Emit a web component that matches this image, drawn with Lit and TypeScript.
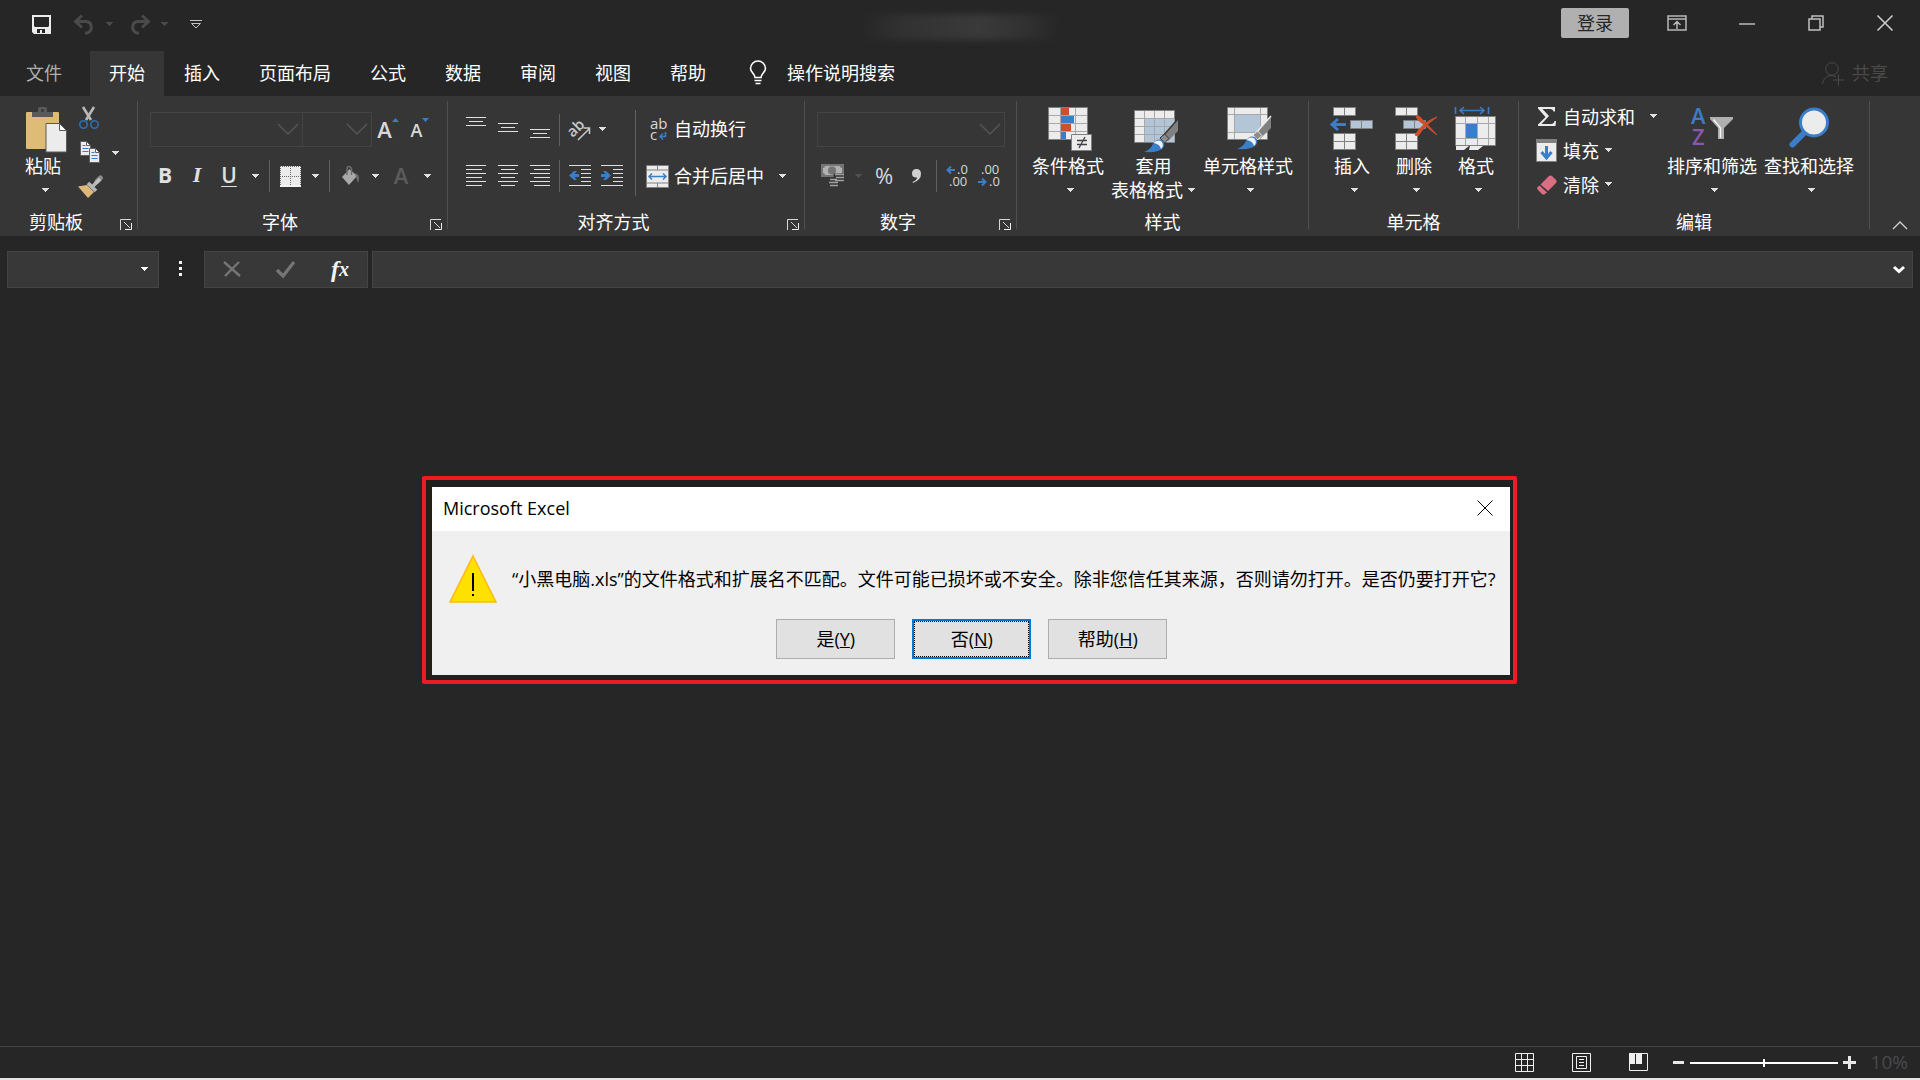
import { LitElement, html, svg, css, nothing } from "lit";
import type { TemplateResult, SVGTemplateResult } from "lit";
import { customElement } from "lit/decorators.js";

/* ---------- shared glyph colours ---------- */
const PALE = "#ececec";
const BLUE = "#3a7dc8";
const SKY = "#b3c6d8";
const GREY = "#808080";
const RED = "#cf4f2c";

const icon = (w: number, h: number, body: SVGTemplateResult) =>
  html`<svg width=${w} height=${h} viewBox="0 0 ${w} ${h}" fill="none" aria-hidden="true">${body}</svg>`;

const caret = (color = "#e0e0e0") =>
  icon(8, 5, svg`<path d="M0 0h7v1H6v1H5v1H4v1H3V3H2V2H1V1H0z" fill=${color} />`);

const chevron = icon(22, 13, svg`<path d="M1 1l10 10L21 1" stroke="#555" stroke-width="1.5" />`);

/* ---------- horizontal line sets for the alignment buttons ---------- */
const lines = (rows: Array<[number, number, number]>, h = 24) =>
  icon(20, h, svg`${rows.map(([x, y, w]) => svg`<rect x=${x} y=${y} width=${w} height="1" fill="#e0e0e0" />`)}`);

const alignTop = lines([[0, 0, 20], [3, 4, 14], [0, 8, 20]], 25);
const alignMiddle = lines([[0, 6, 20], [3, 10, 14], [0, 14, 20]], 25);
const alignBottom = lines([[0, 12, 20], [3, 16, 14], [0, 20, 20]], 25);
const alignLeft = lines([[0, 0, 20], [0, 4, 16], [0, 8, 20], [0, 12, 16], [0, 16, 20], [0, 20, 16]], 23);
const alignCenter = lines([[0, 0, 20], [3, 4, 14], [0, 8, 20], [3, 12, 14], [0, 16, 20], [3, 20, 14]], 23);
const alignRight = lines([[0, 0, 20], [4, 4, 16], [0, 8, 20], [4, 12, 16], [0, 16, 20], [4, 20, 16]], 23);

const indent = (arrow: string) =>
  icon(22, 23, svg`
    <path d="M0 .5h22M12 4.5h10M12 8.5h10M12 12.5h10M12 16.5h10M0 20.5h22" stroke="#e0e0e0" />
    <path d=${arrow} fill=${BLUE} />`);
const outdentIcon = indent("M0 10.5L5 6h3L5.500 9H10v3H5.500L8 15H5z");
const indentIcon = indent("M10 10.5L5 6H2L4.500 9H0v3H4.500L2 15H5z");

/* ---------- title bar ---------- */
const saveIcon = icon(19, 19, svg`
  <path fill-rule="evenodd" fill=${PALE} d="M0 0h19v19H2L0 17zM2 2v9l1 1h13l1-1V2zM5 14v4h3v-3h2v3h3v-4z" />`);
const undoIcon = icon(23, 20, svg`
  <path d="M2 6.500H14a6 6 0 0 1 0 11.500H12" stroke="#4a4a4a" stroke-width="3" />
  <path d="M9 .500L2.500 6.500L9 12.500" stroke="#4a4a4a" stroke-width="3" />`);
const redoIcon = icon(23, 20, svg`
  <path d="M21 6.500H9a6 6 0 0 0 0 11.500H11" stroke="#4a4a4a" stroke-width="3" />
  <path d="M14 .500L20.500 6.500L14 12.500" stroke="#4a4a4a" stroke-width="3" />`);
const customizeIcon = icon(13, 10, svg`<path d="M0 .5h12M1.500 3.500L6 8l4.500-4.500z" stroke="#c4c4c4" />`);
const ribbonModeIcon = icon(20, 16, svg`
  <path d="M1 1h18v14H1zM1 4h18M10 14V6.500M6.500 10L10 6.500l3.500 3.500" stroke="#b8b8b8" stroke-width="1.500" />`);
const minimizeIcon = icon(16, 16, svg`<path d="M0 9h16" stroke="#b8b8b8" stroke-width="1.500" />`);
const restoreIcon = icon(16, 16, svg`<path d="M1 4h11v11H1zM4 4V1h11v11h-3" stroke="#c0c0c0" stroke-width="1.500" />`);
const closeIcon = (color: string, width = 1) =>
  icon(16, 16, svg`<path d="M.5 .5l15 15M15.500 .5l-15 15" stroke=${color} stroke-width=${width} />`);

/* ---------- tab row ---------- */
const bulbIcon = icon(18, 25, svg`
  <path d="M6 17.500C6 14 1.500 12 1.500 8.500a7.500 7.500 0 0 1 15 0C16.500 12 12 14 12 17.500z" stroke="#fff" stroke-width="1.600" />
  <path d="M5.500 20.500h7M6.500 23.500h5" stroke="#fff" stroke-width="1.600" />`);
const shareIcon = icon(22, 24, svg`
  <circle cx="10" cy="8" r="6.300" stroke="#4a4a4a" />
  <path d="M.5 23C1 18 4.500 14.500 9 14.500q3 0 5 1.500M16.500 13.500v11M11 19h11" stroke="#4a4a4a" />`);

/* ---------- clipboard ---------- */
const pasteIcon = icon(50, 46, svg`
  <rect x="8" y="5" width="33" height="37" rx="1" fill="#dfbc76" />
  <path d="M14 5h6V2q0-2 2-2h5q2 0 2 2v3h6v5H14z" fill="#5a5a5a" />
  <circle cx="24.500" cy="3.500" r="1.500" fill="#363636" />
  <path d="M28 16.500h13.500l7 7V45H28z" fill=${PALE} stroke="#5a5a5a" />
  <path d="M41.500 16.500v7h7z" fill="#fff" stroke="#5a5a5a" />`);
const cutIcon = icon(24, 24, svg`
  <path d="M5 1l8 13M16 1L8 14" stroke="#b8b8b8" stroke-width="2.600" />
  <circle cx="5.500" cy="18.500" r="3.700" stroke="#2f6fb4" stroke-width="1.600" />
  <circle cx="16.500" cy="18.500" r="3.700" stroke="#2f6fb4" stroke-width="1.600" />`);
const sheet = svg`
  <path d="M.5 .5h6l4 4v10H.5z" fill=${PALE} stroke="#606060" />
  <path d="M6.500 .5v4h4z" fill="#fff" stroke="#606060" />
  <path d="M2.500 4.500h3M2.500 7.500h6M2.500 10.500h6" stroke=${BLUE} />`;
const copyIcon = icon(24, 24, svg`<g transform="translate(2 0)">${sheet}</g><g transform="translate(11 7)">${sheet}</g>`);
const painterIcon = icon(24, 24, svg`
  <path d="M0 10.500l9-1.500 7 7-6 6z" fill="#deb878" />
  <path d="M10 7l8 8M14.500 10.500L22 3" stroke="#b8b8b8" stroke-width="3.600" />
  <path d="M19 5.500L22.500 2" stroke="#c4c4c4" stroke-width="5" stroke-linecap="round" stroke-opacity=".6" />`);

/* ---------- font ---------- */
const bordersIcon = icon(21, 21, svg`
  <path d="M0 0h21v21H0z" fill=${PALE} />
  <path d="M0 .5h21M.5 0v20M20.500 0v20M10.500 0v20M0 10.500h21" stroke="#6a6a6a" stroke-dasharray="1 1" />
  <path d="M0 20h21" stroke="#f4f4f4" stroke-width="2" />`);
const fillIcon = icon(22, 22, svg`
  <path d="M3 12l7.500-8 7.500 7-8 9z" fill="#a8a8a8" />
  <path d="M8 10V4q0-2.500 2-2.500T12.500 4v6" stroke="#6c6c6c" stroke-width="1.500" />
  <path d="M16 8q4 1 4 5 0 3-1 5-1-3-2-6z" fill="#6c6c6c" />`);
const up = icon(7, 4, svg`<path d="M0 4L3.500 0L7 4z" fill=${BLUE} />`);
const down = icon(7, 4, svg`<path d="M0 0L3.500 4L7 0z" fill=${BLUE} />`);

/* ---------- alignment ---------- */
const orientationIcon = icon(22, 22, svg`
  <text class="tiny" transform="rotate(-45 8 12)" x="0" y="14">ab</text>
  <path d="M9 21L20 10M14.500 9h6v6" stroke="#c8c8c8" stroke-width="1.500" />`);
const wrapIcon = icon(23, 24, svg`
  <text class="abc"><tspan x="4" y="11">ab</tspan><tspan x="4" y="22">c</tspan></text>
  <path d="M19.500 14v4.500H14M17 15.500l-3 3 3 3" stroke=${BLUE} stroke-width="1.600" />`);
const mergeIcon = icon(23, 23, svg`
  <path d="M.5 .5h22v22H.5z" fill=${PALE} stroke=${GREY} />
  <path d="M0 5h23M0 18h23M11.500 0v5M11.500 18v5" stroke=${GREY} />
  <path d="M3 11.500h17M6 8.500l-3 3 3 3M17 8.500l3 3-3 3" stroke=${BLUE} stroke-width="1.500" />`);

/* ---------- number ---------- */
const currencyIcon = icon(24, 24, svg`
  <path d="M0 0h23v13H0z" fill="#747474" />
  <path d="M4 2h15q0 2 2 2v5q-2 0-2 2H4q0-2-2-2V4q2 0 2-2z" fill="#b0b0b0" />
  <circle cx="11" cy="6.500" r="4" fill="#747474" />
  <path d="M12.500 9.500h10v8h-10zM7.500 14.500h10v8h-10z" fill="#363636" />
  <path d="M14 10.500h9M15 13.500h8M14 16.500h9M9 15.500h7M8 18.500h9M9 21.500h8" stroke="#a0a0a0" stroke-width="1.600" />`);
const commaIcon = icon(10, 15, svg`<path d="M4.500 0Q9 0 9 5 9 11 1 14l-.5-1Q5 11 5 8.500 0 9 0 4.500 0 0 4.500 0z" fill="#d0d0d0" />`);
const decIncrease = icon(24, 24, svg`
  <text class="digits"><tspan x="12" y="10">.0</tspan><tspan x="4" y="22">.00</tspan></text>
  <path d="M10 6H3M6 2.500L2.500 6 6 9.500" stroke=${BLUE} stroke-width="2" />`);
const decDecrease = icon(24, 24, svg`
  <text class="digits"><tspan x="4" y="10">.00</tspan><tspan x="12" y="22">.0</tspan></text>
  <path d="M1 18h7M5 14.500L8.500 18 5 21.500" stroke=${BLUE} stroke-width="2" />`);

/* ---------- styles ---------- */
const brush = (edge: string) => svg`
  <path d="M49 9v12L39 31l-5-5z" fill=${GREY} />
  <path d="M49 9L33 27" stroke=${edge} stroke-width="1.500" />
  <path d="M31 28l4.500-4 4.500 4.500-4.500 4.500z" fill="#8c8c8c" stroke=${edge} />
  <path d="M15 42q6-2 9-8 3-6 9-4 4 4 1 8-4 5-19 4z" fill=${BLUE} />
  <path d="M24.500 33q4-4 8-1.500 3 4-.5 7.500-1-5-7.500-6z" fill="#eef4fa" />`;
const conditionalIcon = icon(50, 46, svg`
  <path d="M5.500 .5h39v32h-39z" fill=${PALE} stroke=${GREY} />
  <path d="M17.500 1v31M32.500 1v31M6 8.500h38M6 16.500h38M6 24.500h38" stroke="#a8a8a8" />
  <path d="M18 1h8v7h-8zM18 17h10v7H18z" fill=${RED} />
  <path d="M18 9h13v7H18zM18 25h5v7h-5z" fill=${BLUE} />
  <path d="M28.500 27.500h20v16h-20z" fill=${PALE} stroke=${GREY} />
  <path d="M34 33.500h10M34 37.500h10M42 30l-6 11" stroke="#404040" stroke-width="1.300" />`);
const tableStyleIcon = icon(50, 46, svg`
  <path d="M5.500 3.500h40v32h-40z" fill=${PALE} stroke=${GREY} />
  <path d="M15.500 12h30v23h-30z" fill=${SKY} />
  <path d="M15.500 4v31M25.500 4v31M35.500 4v31M6 11.500h39M6 19.500h39M6 27.500h39" stroke="#a8a8a8" />
  <g transform="translate(0 3)">${brush("#363636")}</g>`);
const cellStyleIcon = icon(50, 46, svg`
  <path d="M4.500 .5h40v32h-40z" fill=${PALE} stroke=${GREY} />
  <path d="M11.500 7.500h26v18h-26z" fill=${SKY} />
  <path d="M11.500 1v31M37.500 1v31M5 7.500h39M5 25.500h39" stroke="#a8a8a8" />
  <g transform="translate(-1 0)">${brush("#ececec")}</g>`);

/* ---------- cells ---------- */
const cellRow = (x: number, y: number, fill: string) =>
  svg`<path d="M${x}.5 ${y}.5h22v8h-22zM${x + 11}.5 ${y}.5v8" fill=${fill} stroke=${GREY} />`;
const insertIcon = icon(50, 46, svg`
  ${cellRow(6, 0, PALE)}${cellRow(23, 13, SKY)}${cellRow(6, 26, PALE)}${cellRow(6, 34, PALE)}
  <path d="M19 17.500H5M11 12l-6 5.500 6 5.500" stroke=${BLUE} stroke-width="3" />`);
const deleteIcon = icon(50, 46, svg`
  ${cellRow(6, 0, PALE)}${cellRow(14, 13, SKY)}${cellRow(6, 26, PALE)}${cellRow(6, 34, PALE)}
  <path d="M27 9q2-1 4 1 8 8 17 18-10-8-19-15z" fill=${RED} stroke=${RED} />
  <path d="M26 28q8-13 22-18-12 8-19 19z" fill=${RED} stroke=${RED} />`);
const formatIcon = icon(50, 46, svg`
  <path d="M4.500 0v7M37.500 0v7M9 3.500h24M13 0L9 3.500 13 7M29 0l4 3.500L29 7" stroke=${BLUE} stroke-width="1.600" />
  <path d="M4.500 9.500h40v29h-40z" fill=${PALE} stroke=${GREY} />
  <path d="M14.500 10v28M26.500 10v28M37.500 10v28M5 16.500h39M5 31.500h39" stroke="#a8a8a8" />
  <path d="M15 17h11v14H15z" fill=${BLUE} />
  <path d="M5 39h13l-5 4H5zM19 39h13l-5 4h-9z" fill=${PALE} />`);

/* ---------- editing ---------- */
const sumIcon = icon(22, 20, svg`<path d="M2 0h17v4.500h-1.500Q17 2 14 2H6.500l6.500 7-7.500 8H15q3 0 3.500-3H20l-.5 5H2v-1.500L9.500 10 2 1.500z" fill=${PALE} />`);
const fillDownIcon = icon(22, 23, svg`
  <path d="M.5 .5h20v22H.5z" fill=${PALE} stroke=${GREY} /><path d="M0 0h21v4H0z" fill=${GREY} />
  <path d="M10.500 7v11M5.500 13l5 6 5-6" stroke=${BLUE} stroke-width="3" />`);
const clearIcon = icon(22, 22, svg`
  <path d="M4.500 10.500L13 2q1.500-1 3 0l4 4q1.500 1.500 0 3L12 17z" fill="#dc6e84" />
  <path d="M3.500 11.500l7.500 7L9 20q-1.500 1-3 0l-4-4q-1.500-1.500-.5-3z" fill="#dc6e84" />`);
const sortIcon = icon(50, 46, svg`
  <text class="sort"><tspan x="4" y="17" fill=${BLUE}>A</tspan><tspan x="5" y="38" fill="#8a56ae">Z</tspan></text>
  <path d="M23 10h23v2L37 21v11h-6V21l-8-9z" fill="#b0b0b0" />
  <path d="M26.500 12.500l7 8.500v10" stroke="#f4f4f4" stroke-width="1.400" />`);
const findIcon = icon(50, 46, svg`
  <path d="M8.500 37.500L22 24" stroke=${BLUE} stroke-width="6" stroke-linecap="round" />
  <circle cx="30" cy="15.500" r="13.500" fill=${PALE} stroke=${BLUE} stroke-width="3" />`);

/* ---------- chrome bits ---------- */
const launcherIcon = icon(12, 11, svg`<path d="M.5 11V.5H11M4 3l6 6" stroke="#d8d8d8" /><path d="M5 10.500h6.500V4" stroke="#f0f0f0" />`);
const collapseIcon = icon(16, 10, svg`<path d="M1 9l7-7 7 7" stroke="#d0d0d0" stroke-width="1.400" />`);
const cancelIcon = icon(18, 18, svg`<path d="M1 2l16 14M16 2L2 16" stroke="#757575" stroke-width="2.400" />`);
const acceptIcon = icon(20, 18, svg`<path d="M1 10l6 6L18 2" stroke="#757575" stroke-width="3.200" />`);
const expandIcon = icon(12, 9, svg`<path d="M1 2l5 4.500L11 2" stroke="#fff" stroke-width="3" />`);
const dotsIcon = icon(3, 16, svg`<path d="M0 0h3v3H0zM0 6h3v3H0zM0 12h3v3H0z" fill="#f4f4f4" />`);
const gridViewIcon = icon(19, 19, svg`<path d="M.5 .5h18v18H.5zM6.500 0v19M12.500 0v19M0 6.500h19M0 12.500h19" stroke="#f0f0f0" />`);
const pageViewIcon = icon(19, 19, svg`<path d="M.5 .5h18v18H.5zM4.500 3.500h10v12h-10zM7 6.500h5M7 9.500h5M7 12.500h5" stroke="#f0f0f0" />`);
const breakViewIcon = icon(19, 19, svg`<path d="M.5 .5h18v17H.5z" stroke="#f0f0f0" /><path d="M0 0h6v11H0zM7 0h6v11H7z" fill="#f0f0f0" />`);
const minusIcon = icon(11, 3, svg`<path d="M0 0h11v3H0z" fill="#e8e8e8" />`);
const plusIcon = icon(13, 13, svg`<path d="M0 5h13v3H0zM5 0h3v13H5z" fill="#e8e8e8" />`);
const warningIcon = icon(48, 48, svg`
  <path d="M24 1L47 47H1z" fill="#ffe100" stroke="#fdb913" stroke-width="1.500" />
  <path d="M23 18h2v18h-2zM23 39h2v2h-2z" fill="#000" />`);

@customElement("app-root")
export class AppRoot extends LitElement {
  static styles = css`
    :host {
      display: flex;
      flex-direction: column;
      position: relative;
      box-sizing: border-box;
      min-height: 100vh;
      background: #262626;
      color: #fff;
      font: 18px/24px "Open Sans", "Noto Sans CJK SC", sans-serif;
      white-space: nowrap;
    }
    *, *::before, *::after { box-sizing: border-box; }
    svg { display: block; flex: none; overflow: visible; }
    button, input, select { font: inherit; color: inherit; margin: 0; padding: 0; border: 0; background: none; border-radius: 0; }
    button { display: flex; align-items: center; justify-content: center; flex: none; }
    select { appearance: none; }
    a { color: inherit; text-decoration: none; }

    .titlebar { display: grid; grid-template-columns: 1fr auto 1fr; align-items: center; height: 51px; }
    .quick { display: flex; align-items: center; padding: 0 0 2px 32px; }
    .quick .undo { margin-left: 22px; }
    .quick .drop { width: 28px; }
    .quick .redo { margin-left: 4px; }
    .quick .customize { margin-left: 11px; }
    .doc-name { width: 200px; height: 26px; margin-top: 2px; border-radius: 12px; filter: blur(3px); background: linear-gradient(90deg, #262626, #313131 20%, #3a3a3a 60%, #303030 85%, #262626); }
    .window { display: flex; align-items: center; justify-content: flex-end; padding: 0 27px 5px 0; }
    .signin { width: 68px; height: 30px; border-radius: 2px; background: #b0b0b0; color: #262626; margin-right: 38px; }
    .window .mode { margin-right: 52px; }
    .window .mini, .window .restore { margin-right: 53px; }

    .tabs { display: flex; align-items: stretch; gap: 1px; height: 45px; padding-right: 32px; }
    .tab { display: flex; align-items: center; padding: 0 19px 2px; }
    .tab.file { padding: 0 27px 2px 26px; color: #b0b0b0; }
    .tab.active { background: #363636; }
    .tell { margin-left: 23px; gap: 20px; padding-bottom: 2px; }
    .share { margin-left: auto; gap: 8px; padding-bottom: 2px; color: #4a4a4a; }

    .ribbon { display: flex; align-items: flex-start; padding-top: 5px; height: 140px; background: #363636; }
    .group { display: flex; flex-direction: column; height: 135px; }
    .divider { width: 1px; height: 128px; flex: none; background: #505050; }
    .body { display: flex; height: 107px; }
    .footer { display: flex; align-items: center; height: 28px; }
    .name { flex: 1; text-align: center; }
    .launcher { width: 25px; padding: 4px 0 0 2px; }
    .collapse { margin: auto 12px 6px auto; }

    .big { flex-direction: column; justify-content: flex-start; padding-top: 6px; min-width: 50px; }
    .big .pic { display: flex; justify-content: center; height: 47px; width: 50px; }
    .big .more { display: flex; align-items: center; justify-content: center; height: 24px; padding-left: 5px; }
    .big .wide { gap: 5px; padding: 0; }

    .clipboard { padding: 0 17px 0 18px; gap: 10px; }
    .stack { display: flex; flex-direction: column; }
    .clipboard .stack { gap: 3px; padding-top: 1px; }
    .small { height: 32px; justify-content: flex-start; gap: 10px; }

    .rows { flex-direction: column; gap: 13px; padding-top: 11px; }
    .font { padding-left: 12px; padding-right: 9px; }
    .number { padding-left: 12px; padding-right: 11px; }
    .line { display: flex; align-items: center; height: 32px; }
    .line.first { height: 35px; }
    .tool { width: 32px; height: 32px; }
    .drop { width: 20px; height: 32px; }
    .drop.tight { width: 14px; }
    .bar { width: 1px; height: 32px; margin: 0 4px 0 3px; background: #606060; flex: none; }
    .combo { display: grid; align-items: center; height: 35px; border: 1px solid #444; background: #363636; }
    .combo select, .combo svg { grid-area: 1 / 1; }
    .combo select { width: 100%; height: 100%; }
    .combo svg { justify-self: end; margin-right: 3px; pointer-events: none; }
    .face { width: 153px; }
    .size { width: 70px; margin-left: -1px; }
    .format { width: 188px; }

    .bold, .italic, .underline, .ink, .percent { padding: 0 2px 2px 0; }
    .bold { font-weight: 700; font-size: 21px; color: #e0e0e0; }
    .italic { font: italic 700 22px/24px "Liberation Serif", serif; color: #e0e0e0; }
    .underline { font-size: 21px; font-weight: 600; color: #e0e0e0; text-decoration: underline; text-decoration-thickness: 1px; text-underline-offset: 3px; }
    .grow, .shrink { align-items: flex-start; font-weight: 600; color: #d8d8d8; }
    .grow { font-size: 22px; line-height: 30px; }
    .shrink { font-size: 18px; line-height: 33px; }
    .grow svg, .shrink svg { margin-top: 4px; }
    .ink { font-size: 22px; font-weight: 600; color: #5c5c5c; }
    .percent { font-size: 22px; color: #d8d8d8; }
    .tiny { font: 600 15px "Open Sans", sans-serif; fill: #c8c8c8; }
    .abc { font: 15px "Open Sans", sans-serif; fill: #d8d8d8; }
    .digits { font: 13px "Open Sans", sans-serif; fill: #d8d8d8; }
    .sort { font: 600 22px "Open Sans", sans-serif; }

    .align { padding: 0 17px 0 12px; }
    .align .rows { display: flex; }
    .tall { width: 1px; height: 86px; margin: 9px 10px 0 7px; background: #606060; flex: none; }
    .label { height: 32px; gap: 5px; justify-content: flex-start; }
    .label span { padding-bottom: 1px; }
    .label .far { margin-left: 10px; padding: 0; }

    .styles { padding: 0 15px; gap: 7px; }
    .cells { padding: 0 17px 0 18px; gap: 12px; }
    .edit { padding: 0 15px 0 17px; gap: 7px; }
    .edit .stack { gap: 2px; margin-right: 2px; }
    .edit .small { gap: 5px; padding-bottom: 1px; }
    .edit .small .near { margin-left: 1px; }
    .edit .small .far { margin-left: 10px; }

    .formula { display: flex; align-items: stretch; height: 37px; margin: 15px 7px 0; }
    .field { display: flex; align-items: center; border: 1px solid #444; background: #383838; }
    .formula .namebox { display: grid; width: 152px; border: 1px solid #444; background: #383838; align-items: center; height: 37px; }
    .formula .namebox svg { margin-right: 9px; }
    .dots { display: flex; align-items: center; padding: 0 22px 2px 20px; }
    .entry { width: 164px; padding: 0 18px 2px 18px; justify-content: space-between; margin-right: 4px; }
    .fx { font: italic 700 24px/24px "Liberation Serif", serif; color: #f4f4f4; }
    .fx small { font-size: 20px; }
    .content { flex: 1; padding-right: 7px; }
    .content input { flex: 1; min-width: 0; height: 100%; }

    .workspace { flex: 1; }

    .status { display: flex; align-items: center; justify-content: flex-end; height: 32px; border-top: 1px solid #444; padding: 0 12px 0 0; }
    .view { width: 57px; height: 28px; }
    .step { width: 23px; height: 28px; }
    .zoom { appearance: none; width: 148px; height: 10px; background: linear-gradient(#fff, #fff) center / 100% 2px no-repeat; }
    .zoom::-webkit-slider-thumb { appearance: none; width: 2px; height: 8px; background: #fff; }
    .level { font-size: 19px; color: #4a4a4a; margin-left: 10px; padding-bottom: 2px; }
    .edge { height: 2px; background: #e6e6e6; }

    .highlight { position: absolute; top: 476px; left: 422px; border: 4px solid #ed1c24; border-radius: 2px; padding: 7px 3px 5px 6px; background: #202020; }
    .dialog { background: #f0f0f0; color: #000; }
    .caption { display: flex; align-items: center; justify-content: space-between; height: 44px; padding: 0 17px 2px 11px; background: #fff; }
    .message { display: flex; align-items: center; gap: 15px; padding: 24px 14px 16px 17px; }
    .message p { margin: 0; }
    .actions { display: flex; justify-content: center; gap: 17px; padding: 0 0 16px 2px; }
    .actions button { width: 119px; height: 40px; background: #e1e1e1; border: 1px solid #adadad; }
    .actions .default { border: 2px solid #0078d7; outline: 1px dotted #000; outline-offset: -3px; }
  `;

  private tool(label: string, content: TemplateResult | string, cls = "") {
    return html`<button class="tool ${cls}" aria-label=${label}>${content}</button>`;
  }

  private drop(label: string, cls = "", color?: string) {
    return html`<button class="drop ${cls}" aria-label=${label}>${caret(color)}</button>`;
  }

  private big(label: string, pic: TemplateResult, second = "") {
    return html`<button class="big">
      <span class="pic">${pic}</span>
      <span>${label}</span>
      <span class="more ${second ? "wide" : ""}">${second ? html`<span>${second}</span>` : nothing}${caret()}</span>
    </button>`;
  }

  private group(name: string, body: TemplateResult, launcher = true) {
    return html`<section class="group" aria-label=${name}>
        ${body}
        <div class="footer">
          <span class="name">${name}</span>
          ${launcher ? html`<button class="launcher" aria-label="${name}设置">${launcherIcon}</button>` : nothing}
        </div>
      </section>
      <span class="divider"></span>`;
  }

  private combo(label: string, cls: string) {
    return html`<div class="combo ${cls}"><select aria-label=${label}></select>${chevron}</div>`;
  }

  private renderRibbon() {
    return html`<div class="ribbon">
      ${this.group("剪贴板", html`<div class="body clipboard">
        ${this.big("粘贴", pasteIcon)}
        <div class="stack">
          <button class="small" aria-label="剪切">${cutIcon}</button>
          <button class="small" aria-label="复制">${copyIcon}${caret()}</button>
          <button class="small" aria-label="格式刷">${painterIcon}</button>
        </div>
      </div>`)}
      ${this.group("字体", html`<div class="body rows font">
        <div class="line first">
          ${this.combo("字体", "face")}${this.combo("字号", "size")}
          ${this.tool("增大字号", html`A${up}`, "grow")}${this.tool("减小字号", html`A${down}`, "shrink")}
        </div>
        <div class="line">
          ${this.tool("加粗", "B", "bold")}${this.tool("倾斜", "I", "italic")}${this.tool("下划线", "U", "underline")}
          ${this.drop("下划线选项")}<span class="bar"></span>
          ${this.tool("边框", bordersIcon)}${this.drop("边框选项")}<span class="bar"></span>
          ${this.tool("填充颜色", fillIcon)}${this.drop("填充颜色选项")}
          ${this.tool("字体颜色", "A", "ink")}${this.drop("字体颜色选项")}
        </div>
      </div>`)}
      ${this.group("对齐方式", html`<div class="body align">
        <div class="rows">
          <div class="line first">
            ${this.tool("顶端对齐", alignTop)}${this.tool("垂直居中", alignMiddle)}${this.tool("底端对齐", alignBottom)}
            <span class="bar"></span>${this.tool("方向", orientationIcon)}${this.drop("方向选项", "tight")}
          </div>
          <div class="line">
            ${this.tool("左对齐", alignLeft)}${this.tool("居中", alignCenter)}${this.tool("右对齐", alignRight)}
            <span class="bar"></span>${this.tool("减少缩进量", outdentIcon)}${this.tool("增加缩进量", indentIcon)}
          </div>
        </div>
        <span class="tall"></span>
        <div class="rows">
          <div class="line first"><button class="label">${wrapIcon}<span>自动换行</span></button></div>
          <div class="line"><button class="label">${mergeIcon}<span>合并后居中</span><span class="far">${caret()}</span></button></div>
        </div>
      </div>`)}
      ${this.group("数字", html`<div class="body rows number">
        <div class="line first">${this.combo("数字格式", "format")}</div>
        <div class="line">
          ${this.tool("会计数字格式", currencyIcon)}${this.drop("会计数字格式选项", "", "#505050")}
          ${this.tool("百分比样式", "%", "percent")}${this.tool("千位分隔样式", commaIcon)}
          <span class="bar"></span>${this.tool("增加小数位数", decIncrease)}${this.tool("减少小数位数", decDecrease)}
        </div>
      </div>`)}
      ${this.group("样式", html`<div class="body styles">
        ${this.big("条件格式", conditionalIcon)}${this.big("套用", tableStyleIcon, "表格格式")}${this.big("单元格样式", cellStyleIcon)}
      </div>`, false)}
      ${this.group("单元格", html`<div class="body cells">
        ${this.big("插入", insertIcon)}${this.big("删除", deleteIcon)}${this.big("格式", formatIcon)}
      </div>`, false)}
      ${this.group("编辑", html`<div class="body edit">
        <div class="stack">
          <button class="small">${sumIcon}<span>自动求和</span><span class="far">${caret()}</span></button>
          <button class="small">${fillDownIcon}<span>填充</span><span class="near">${caret()}</span></button>
          <button class="small">${clearIcon}<span>清除</span><span class="near">${caret()}</span></button>
        </div>
        ${this.big("排序和筛选", sortIcon)}${this.big("查找和选择", findIcon)}
      </div>`, false)}
      <button class="collapse" aria-label="折叠功能区">${collapseIcon}</button>
    </div>`;
  }

  render() {
    const tabs = ["开始", "插入", "页面布局", "公式", "数据", "审阅", "视图", "帮助"];
    return html`
      <header class="titlebar">
        <div class="quick">
          <button aria-label="保存">${saveIcon}</button>
          <button class="undo" aria-label="撤消">${undoIcon}</button>${this.drop("撤消选项", "", "#4a4a4a")}
          <button class="redo" aria-label="恢复">${redoIcon}</button>${this.drop("恢复选项", "", "#4a4a4a")}
          <button class="customize" aria-label="自定义快速访问工具栏">${customizeIcon}</button>
        </div>
        <div class="doc-name"></div>
        <div class="window">
          <button class="signin">登录</button>
          <button class="mode" aria-label="功能区显示选项">${ribbonModeIcon}</button>
          <button class="mini" aria-label="最小化">${minimizeIcon}</button>
          <button class="restore" aria-label="还原">${restoreIcon}</button>
          <button aria-label="关闭">${closeIcon("#d0d0d0", 1.5)}</button>
        </div>
      </header>
      <nav class="tabs">
        <a class="tab file" href="#file">文件</a>
        ${tabs.map((t, i) => html`<a class="tab ${i === 0 ? "active" : ""}" href="#tab-${i}">${t}</a>`)}
        <button class="tell">${bulbIcon}<span>操作说明搜索</span></button>
        <button class="share">${shareIcon}<span>共享</span></button>
      </nav>
      ${this.renderRibbon()}
      <div class="formula">
        <div class="combo namebox"><select aria-label="名称框"></select>${caret("#fff")}</div>
        <span class="dots">${dotsIcon}</span>
        <div class="field entry">
          <button aria-label="取消">${cancelIcon}</button>
          <button aria-label="输入">${acceptIcon}</button>
          <button class="fx" aria-label="插入函数">f<small>x</small></button>
        </div>
        <div class="field content">
          <input type="text" aria-label="编辑栏" /><button aria-label="展开编辑栏">${expandIcon}</button>
        </div>
      </div>
      <main class="workspace"></main>
      <footer class="status">
        <button class="view" aria-label="普通">${gridViewIcon}</button>
        <button class="view" aria-label="页面布局">${pageViewIcon}</button>
        <button class="view" aria-label="分页预览">${breakViewIcon}</button>
        <button class="step" aria-label="缩小">${minusIcon}</button>
        <input class="zoom" type="range" min="0" max="100" value="50" aria-label="显示比例" />
        <button class="step" aria-label="放大">${plusIcon}</button>
        <span class="level">10%</span>
      </footer>
      <div class="edge"></div>
      <div class="highlight">
        <div class="dialog" role="alertdialog" aria-labelledby="caption" aria-describedby="message">
          <div class="caption"><span id="caption">Microsoft Excel</span><button aria-label="关闭">${closeIcon("#000")}</button></div>
          <div class="message">
            ${warningIcon}
            <p id="message">“小黑电脑.xls”的文件格式和扩展名不匹配。文件可能已损坏或不安全。除非您信任其来源，否则请勿打开。是否仍要打开它?</p>
          </div>
          <div class="actions">
            <button><span>是(<u>Y</u>)</span></button>
            <button class="default"><span>否(<u>N</u>)</span></button>
            <button><span>帮助(<u>H</u>)</span></button>
          </div>
        </div>
      </div>
    `;
  }
}
